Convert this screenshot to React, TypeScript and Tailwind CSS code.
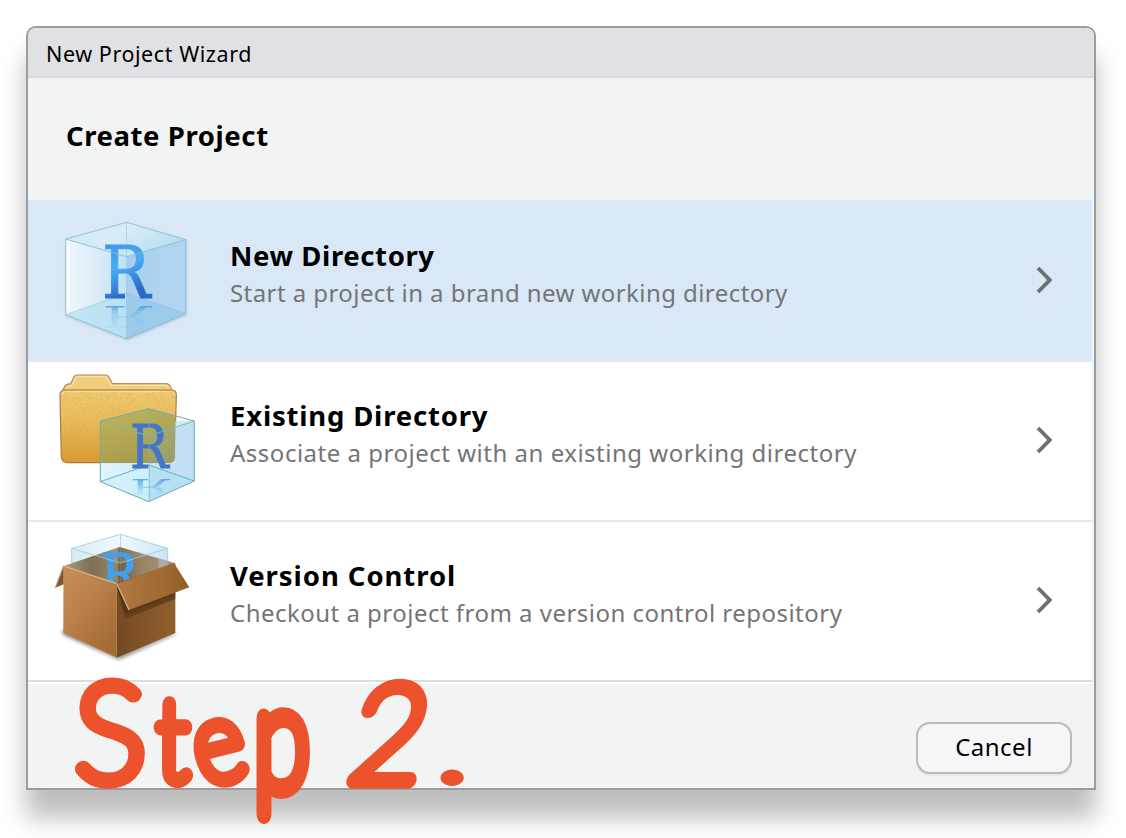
import type { ReactNode } from 'react';

function CubeIcon() {
  return (
    <svg className="h-[158px] w-[150px] shrink-0" viewBox="0 -24 450 474" aria-hidden="true">
      <defs>
        <linearGradient id="c1left" x1="0" x2="1" y1="0" y2="0">
          <stop offset="0" stopColor="#f0f6fc" />
          <stop offset="0.5" stopColor="#dcecf8" />
          <stop offset="1" stopColor="#bfe2f4" />
        </linearGradient>
        <linearGradient id="c1right" x1="0" x2="1" y1="0" y2="0">
          <stop offset="0" stopColor="#a9cfee" />
          <stop offset="1" stopColor="#b2d5f1" />
        </linearGradient>
        <linearGradient id="c1top" x1="0" x2="1" y1="0" y2="0.4">
          <stop offset="0" stopColor="#cfe8f5" />
          <stop offset="0.5" stopColor="#d6edf7" />
          <stop offset="1" stopColor="#b9dff0" />
        </linearGradient>
        <linearGradient id="c1r" gradientUnits="userSpaceOnUse" x1="0" x2="60" y1="-160" y2="0">
          <stop offset="0" stopColor="#3d97e8" />
          <stop offset="0.5" stopColor="#47acf5" />
          <stop offset="1" stopColor="#2a68c6" />
        </linearGradient>
        <linearGradient id="c1ref" gradientUnits="userSpaceOnUse" x1="0" x2="0" y1="0" y2="-160">
          <stop offset="0" stopColor="#3f96dc" stopOpacity="0.85" />
          <stop offset="0.3" stopColor="#6bb5e6" stopOpacity="0.45" />
          <stop offset="1" stopColor="#8ac8ec" stopOpacity="0.2" />
        </linearGradient>
        <filter id="c1s" x="-10%" y="-10%" width="120%" height="120%">
          <feDropShadow dx="2" dy="4" stdDeviation="3" floodColor="#6b86a8" floodOpacity="0.4" />
        </filter>
      </defs>
      <path d="M230 37 407 87V311L230 386 47 314V87Z" fill="#cde4f4" filter="url(#c1s)" />
      <path d="M47 87 230 140V386L47 314Z" fill="url(#c1left)" />
      <path d="M230 140 407 89V311L230 386Z" fill="url(#c1right)" />
      <path d="M47 314 230 250V386Z" fill="#b5dff0" opacity="0.75" />
      <path d="M230 250 407 311 230 386Z" fill="#98cae8" opacity="0.8" />
      <path d="M230 37 407 89 230 140 47 87Z" fill="url(#c1top)" />
      <path d="M55 105V300" stroke="#fff" strokeWidth="9" opacity="0.85" />
      <path d="M47 314 230 250 407 311" fill="none" stroke="#7db6cc" strokeWidth="2" opacity="0.65" />
      <g fontFamily="DejaVu Serif, serif" fontSize="221" strokeWidth="3">
        <text transform="translate(156 265) scale(.87 1)" fill="url(#c1r)" stroke="url(#c1r)">R</text>
        <text transform="translate(156 287) scale(.87 -.4)" fill="url(#c1ref)">R</text>
      </g>
      <path d="M230 37V386" stroke="#5da9c2" strokeWidth="2" opacity="0.55" />
      <path d="M230 37 407 89 230 140 47 87ZM47 87V314L230 386 407 311V89" fill="none" stroke="#85bdcd" strokeWidth="2.6" strokeLinejoin="round" />
    </svg>
  );
}

function FolderIcon() {
  return (
    <svg className="h-[158px] w-[150px] shrink-0" viewBox="0 -9 450 474" aria-hidden="true">
      <defs>
        <linearGradient id="f1" x1="0" x2="0" y1="0" y2="1">
          <stop offset="0" stopColor="#f3cf78" />
          <stop offset="0.45" stopColor="#ebbd5e" />
          <stop offset="1" stopColor="#d9982f" />
        </linearGradient>
        <linearGradient id="f2" x1="0" x2="1" y1="0" y2="1">
          <stop offset="0" stopColor="#a3ab58" stopOpacity="0.55" />
          <stop offset="1" stopColor="#8c9a5c" stopOpacity="0.75" />
        </linearGradient>
        <linearGradient id="f3" x1="0" x2="1" y1="0" y2="0">
          <stop offset="0" stopColor="#d8f3fd" />
          <stop offset="0.5" stopColor="#cfebf9" />
          <stop offset="1" stopColor="#c6e3f7" />
        </linearGradient>
        <linearGradient id="f4" gradientUnits="userSpaceOnUse" x1="0" x2="0" y1="0" y2="-130">
          <stop offset="0" stopColor="#4aa6e6" stopOpacity="0.9" />
          <stop offset="1" stopColor="#8accf0" stopOpacity="0.15" />
        </linearGradient>
        <filter id="grain" x="0" y="0" width="100%" height="100%">
          <feTurbulence type="fractalNoise" baseFrequency="0.5" numOctaves="2" />
          <feColorMatrix values="0 0 0 0 0.62  0 0 0 0 0.38  0 0 0 0 0.05  1.6 0 0 0 -0.6" />
          <feComposite in2="SourceGraphic" operator="in" />
        </filter>
        <clipPath id="fcube"><path d="M296 131 433 168V348L296 410 151 350V168Z" /></clipPath>
      </defs>
      <path d="M38 80Q42 61 52 58L62 56 73 34Q75 30 80 30H167Q173 30 176 35L187 56H350Q362 57 366 80Z" fill="#f0cc7b" stroke="#b88a5d" strokeWidth="3.5" />
      <path d="M48 72Q52 62 66 61L78 38Q79 35 84 35H164Q169 35 171 39L183 61H346Q356 63 358 70" fill="none" stroke="#fae9b8" strokeWidth="3" />
      <path d="M43 75H367Q380 77 379 91L374 276Q373 292 357 293H51Q35 291 34 276L30 91Q30 77 43 75Z" fill="url(#f1)" stroke="#aa713d" strokeWidth="3.5" />
      <path d="M43 75H367Q380 77 379 91L374 276Q373 292 357 293H51Q35 291 34 276L30 91Q30 77 43 75Z" fill="#000" filter="url(#grain)" opacity="0.8" />
      <path d="M36 90Q37 80 46 80H364Q374 81 374 90" fill="none" stroke="#f9e0a2" strokeWidth="3" />
      <path d="M151 293H374V168H433V348L296 410 151 350Z" fill="url(#f3)" opacity="0.85" />
      <g clipPath="url(#fcube)">
        <path d="M140 120H378L374 276Q373 292 357 293H140Z" fill="url(#f2)" />
        <path d="M296 213 433 168V420H296Z" fill="#7fb7df" opacity="0.16" />
      </g>
      <path d="M151 350 296 300 433 348 296 410Z" fill="#c8effa" opacity="0.55" />
      <path d="M296 300 433 348 296 410Z" fill="#a8d5ed" opacity="0.5" />
      <path d="M151 350 296 300 433 348" fill="none" stroke="#50b1be" strokeWidth="2.8" />
      <g fontFamily="DejaVu Serif, serif" fontSize="177" strokeWidth="2.5">
        <text transform="translate(240 310) scale(.87 1)" fill="#4376c8" stroke="#4376c8">R</text>
        <text transform="translate(240 342) scale(.87 -.38)" fill="url(#f4)">R</text>
      </g>
      <path d="M151 168 296 213 433 168" fill="none" stroke="#79b9ad" strokeWidth="2.8" />
      <path d="M298 131V410" stroke="#78b3ac" strokeWidth="2.2" opacity="0.8" />
      <path d="M296 131 433 168V348L296 410 151 350V168Z" fill="none" stroke="#66adb2" strokeWidth="3" strokeLinejoin="round" />
    </svg>
  );
}

function BoxIcon() {
  return (
    <svg className="h-[158px] w-[150px] shrink-0" viewBox="0 -9 450 474" aria-hidden="true">
      <defs>
        <linearGradient id="b1" x1="0" x2="0.7" y1="0" y2="1">
          <stop offset="0" stopColor="#c9905a" />
          <stop offset="0.5" stopColor="#b87f48" />
          <stop offset="1" stopColor="#a36c34" />
        </linearGradient>
        <linearGradient id="b2" x1="0" x2="1" y1="0" y2="0">
          <stop offset="0" stopColor="#744922" />
          <stop offset="1" stopColor="#91602e" />
        </linearGradient>
        <linearGradient id="b3" x1="0" x2="1" y1="0" y2="0">
          <stop offset="0" stopColor="#b47a41" />
          <stop offset="1" stopColor="#915f2c" />
        </linearGradient>
        <linearGradient id="b4" x1="0" x2="1" y1="0" y2="0">
          <stop offset="0" stopColor="#b19c83" />
          <stop offset="0.25" stopColor="#7d6e55" />
          <stop offset="0.48" stopColor="#9b8664" />
          <stop offset="0.5" stopColor="#6f5f3e" />
          <stop offset="0.7" stopColor="#988565" />
          <stop offset="1" stopColor="#a99271" />
        </linearGradient>
        <linearGradient id="b5" gradientUnits="userSpaceOnUse" x1="290" x2="300" y1="235" y2="262">
          <stop offset="0" stopColor="#4b2d12" />
          <stop offset="1" stopColor="#6b4522" />
        </linearGradient>
        <linearGradient id="b6" x1="0" x2="1" y1="0" y2="0">
          <stop offset="0" stopColor="#d6edf4" />
          <stop offset="0.5" stopColor="#f0f9fc" />
          <stop offset="1" stopColor="#cce6fa" />
        </linearGradient>
        <filter id="bb" x="-20%" y="-20%" width="140%" height="140%"><feGaussianBlur stdDeviation="7" /></filter>
        <clipPath id="bopen"><path d="M0 0H450V93L200 176 40 126Z" /></clipPath>
      </defs>
      <path d="M42 312 200 392 372 320 374 326 206 402 38 326Z" fill="#000" opacity="0.65" filter="url(#bb)" />
      <path d="M211 28 353 70V140L200 176 65 130V70Z" fill="url(#b6)" />
      <path d="M41 123 209 66 374 114 200 178Z" fill="url(#b4)" />
      <path d="M65 72V112L209 66 353 106V72L211 114Z" fill="#cdeaf2" opacity="0.12" />
      <path d="M325 99 353 106V119L325 130Z" fill="#b9bbcc" opacity="0.6" />
      <g clipPath="url(#bopen)">
        <path d="M211 28V178" stroke="#71a69a" strokeWidth="2" opacity="0.7" />
        <text transform="translate(152 210) scale(.87 1)" fontFamily="DejaVu Serif, serif" fontSize="171" fill="#44a0e8" stroke="#44a0e8" strokeWidth="5">R</text>
      </g>
      <path d="M65 70 211 28 353 70 211 114ZM65 70V114M353 70V108" fill="none" stroke="#9bccd0" strokeWidth="2.8" opacity="0.85" />
      <path d="M41 122 200 175V398L40 323Z" fill="url(#b1)" />
      <path d="M200 175 376 114V324L200 398Z" fill="url(#b2)" />
      <path d="M200 180 376 190V222L226 282Z" fill="url(#b5)" opacity="0.75" />
      <path d="M201 176 372 114 418 187 237 255Z" fill="url(#b3)" />
      <path d="M201 178 237 255 M41 123 200 176" fill="none" stroke="#dfb58d" strokeWidth="3.5" />
      <path d="M41 122V178L16 188Z" fill="#86562c" />
      <path d="M41 122 16 188" stroke="#c0986e" strokeWidth="3" />
      <path d="M41 123V323L200 398" fill="none" stroke="#cd9a68" strokeWidth="2" opacity="0.6" />
    </svg>
  );
}

function Chevron() {
  return (
    <svg className="h-8 w-6" viewBox="0 0 24 32" fill="none" aria-hidden="true">
      <path d="M6 4 17.7 16 6 28" stroke="#6b7074" strokeWidth="3.9" />
    </svg>
  );
}

type RowProps = { icon: ReactNode; title: string; text: string; rowClass: string; titleClass: string; textClass: string };

function Row({ icon, title, text, rowClass, titleClass, textClass }: RowProps) {
  return (
    <button type="button" className={`flex h-[160px] w-[1064px] items-start border-t-2 pl-[22px] text-left ${rowClass}`}>
      {icon}
      <span className="ml-[30px] flex grow flex-col whitespace-nowrap pt-[35px]">
        <span className={`text-[27.5px] leading-[38px] font-bold text-black ${titleClass}`}>{title}</span>
        <span className={`text-[24px] leading-[36px] text-[#747576] ${textClass}`}>{text}</span>
      </span>
      <span className="mt-[62px] mr-[36px]"><Chevron /></span>
    </button>
  );
}

export default function App() {
  return (
    <div className="h-[838px] w-[1126px] overflow-hidden bg-white p-[26px] font-['Noto_Sans','Open_Sans',sans-serif]">
      <div className="relative flex h-[764px] w-[1070px] flex-col rounded-t-[10px] border-2 border-[#9b9c9b] bg-[#f2f4f3] shadow-[0_28px_25px_rgba(0,0,0,0.26)]">
        <div className="flex h-[50px] shrink-0 items-center rounded-t-[8px] border-b-2 border-[#d7d8dc] bg-[#e0e1e5] pt-[5px] pl-[18px] text-[21.5px] text-black">
          <span className="tracking-[0.57px]">New Project Wizard</span>
        </div>
        <div className="flex h-[122px] shrink-0 items-center pb-[6px] pl-[38px]">
          <h1 className="text-[27.5px] font-bold tracking-[0.58px] text-black">Create Project</h1>
        </div>
        <Row icon={<CubeIcon />} title="New Directory" text="Start a project in a brand new working directory" rowClass="border-[#dae7f6] bg-[#dae7f6]" titleClass="tracking-[0.61px]" textClass="tracking-[0.43px]" />
        <Row icon={<FolderIcon />} title="Existing Directory" text="Associate a project with an existing working directory" rowClass="border-[#e6e7e7] bg-white" titleClass="tracking-[0.81px]" textClass="tracking-[0.51px]" />
        <Row icon={<BoxIcon />} title="Version Control" text="Checkout a project from a version control repository" rowClass="border-[#e6e7e7] bg-white" titleClass="tracking-[0.94px]" textClass="tracking-[0.48px]" />
        <div className="h-[4px] w-[1064px] shrink-0 border-t-2 border-[#dcdddd] bg-white" />
        <div className="flex grow justify-end pt-[38px] pr-[22px]">
          <button type="button" className="flex h-[52px] w-[156px] items-center justify-center rounded-[14px] border-2 border-[#b9baba] bg-[#f6f6f8] pb-[2px] text-[24px] tracking-[0.5px] text-black shadow-[0_2px_1px_rgba(0,0,0,0.05)]">Cancel</button>
        </div>
        <svg className="pointer-events-none absolute top-[592px] left-[32px] h-[218px] w-[430px] overflow-visible" viewBox="60 620 430 218" role="img" aria-label="Step 2.">
          <g fontFamily="Lato, sans-serif" fontWeight="100" fontSize="112" fill="#ec522c" stroke="#ec522c" strokeWidth="15" strokeLinejoin="round" strokeLinecap="round">
            <text transform="translate(75 781)" fontSize="134">S</text>
            <text transform="translate(157 780) scale(.86 1)">t</text>
            <text transform="rotate(-14 221 752) translate(195 780) scale(.87 1)">e</text>
            <text transform="translate(254 788) scale(.91 1.28)" strokeWidth="15">p</text>
            <text transform="translate(345 781) skewX(-10) scale(.95 1)" fontSize="134">2</text>
            <text transform="translate(437 784) scale(1.3 .92)" fontSize="98" fontWeight="700" strokeWidth="3">.</text>
          </g>
        </svg>
      </div>
    </div>
  );
}
